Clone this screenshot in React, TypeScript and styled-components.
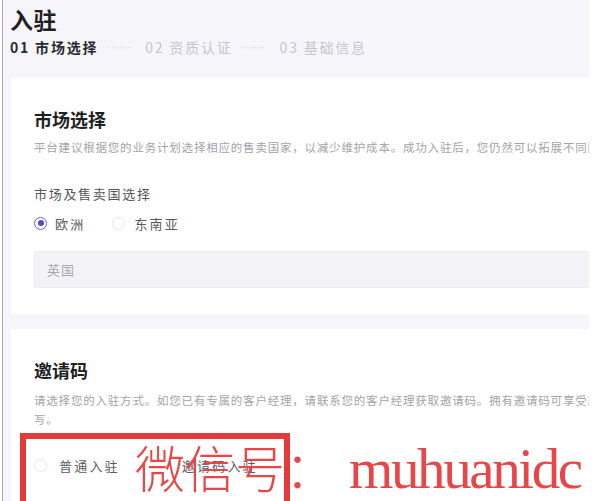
import React from "react";
import styled, { createGlobalStyle } from "styled-components";

const GlobalStyle = createGlobalStyle`
  html, body {
    margin: 0;
    padding: 0;
    background: #ffffff;
  }
  body {
    font-family: "Noto Sans CJK SC", "Noto Sans", sans-serif;
  }
`;

const Screen = styled.div`
  position: relative;
  display: flex;
  width: 605px;
  height: 501px;
  overflow: hidden;
  background: #ffffff;
`;

const Edge = styled.div`
  width: 3px;
  flex: none;
  border-right: 1.5px solid #a9a9ad;
  box-sizing: border-box;
`;

const Main = styled.main`
  width: 586px;
  flex: none;
  overflow: hidden;
  background: #f6f6fa;
  padding: 4px 0 0 7px;
  box-sizing: border-box;
`;

const Title = styled.h1`
  margin: 0;
  font-size: 23px;
  line-height: 30px;
  font-weight: 700;
  letter-spacing: 0.5px;
  color: #1f1f24;
`;

const Steps = styled.div`
  display: flex;
  align-items: center;
  gap: 9px;
  margin-top: 3px;
  height: 20px;
`;

const Step = styled.span<{ active?: boolean }>`
  font-size: 14px;
  letter-spacing: 1.8px;
  font-weight: ${({ active }) => (active ? 700 : 400)};
  color: ${({ active }) => (active ? "#2a2a30" : "#c6c6ce")};
`;

const Dots = styled.span`
  font-family: "Liberation Sans", sans-serif;
  font-size: 12px;
  letter-spacing: 0;
  color: #d6d6dc;
  margin-right: 5px;
`;

const Card = styled.section<{ gap?: number }>`
  width: 640px;
  margin-left: 1px;
  background: #ffffff;
  margin-top: ${({ gap }) => gap ?? 0}px;
  padding: 28px 23px 26px;
  box-sizing: border-box;
`;

const CardTitle = styled.h2`
  margin: 0;
  font-size: 18px;
  line-height: 26px;
  font-weight: 700;
  color: #1f1f24;
`;

const Desc = styled.p<{ nowrap?: boolean; top: number }>`
  margin: ${({ top }) => top}px 0 0;
  font-size: 11.5px;
  line-height: 19px;
  letter-spacing: 0.8px;
  color: #a3a3aa;
  white-space: ${({ nowrap }) => (nowrap ? "nowrap" : "normal")};
`;

const Label = styled.div`
  margin-top: 27px;
  font-size: 13px;
  line-height: 20px;
  letter-spacing: 1.7px;
  color: #55555c;
`;

const RadioRow = styled.div<{ top: number; spread: number }>`
  display: flex;
  align-items: center;
  gap: ${({ spread }) => spread}px;
  margin-top: ${({ top }) => top}px;
  height: 20px;
`;

const Option = styled.label<{ space: number }>`
  display: flex;
  align-items: center;
  gap: ${({ space }) => space}px;
  font-size: 13px;
  letter-spacing: 2.2px;
  color: #5a5a62;
`;

const Radio = styled.span<{ checked?: boolean }>`
  position: relative;
  width: 13px;
  height: 13px;
  border-radius: 50%;
  box-sizing: border-box;
  border: 1.5px solid ${({ checked }) => (checked ? "#6a5fd8" : "#e6e6ea")};
  &::after {
    content: "";
    display: ${({ checked }) => (checked ? "block" : "none")};
    position: absolute;
    inset: 2.5px;
    border-radius: 50%;
    background: #5549cf;
  }
`;

const Field = styled.div`
  margin-top: 18px;
  height: 37px;
  display: flex;
  align-items: center;
  padding-left: 12px;
  background: #f3f3f7;
  border: 1px solid #ececf1;
  border-radius: 2px;
  font-size: 13px;
  letter-spacing: 1px;
  color: #a8a8b0;
  box-sizing: border-box;
`;

const Highlight = styled.div`
  position: absolute;
  left: 20px;
  top: 433px;
  width: 270px;
  height: 90px;
  border: 6px solid #e43a3c;
  box-sizing: border-box;
`;

const Watermark = styled.div`
  position: absolute;
  left: 135px;
  top: 434px;
  display: flex;
  align-items: baseline;
  line-height: 64px;
  color: #e8474a;
  white-space: nowrap;
`;

const MarkCjk = styled.span`
  font-family: "Noto Sans CJK SC", sans-serif;
  font-size: 50px;
  font-weight: 300;
`;

const MarkLatin = styled.span`
  font-family: "Liberation Serif", serif;
  font-size: 57px;
  letter-spacing: -2.4px;
  margin-left: 14px;
`;

export default function App() {
  return (
    <>
      <GlobalStyle />
      <Screen>
        <Edge />
        <Main>
          <Title>入驻</Title>
          <Steps>
            <Step active>01 市场选择</Step>
            <Dots>······</Dots>
            <Step>02 资质认证</Step>
            <Dots>······</Dots>
            <Step>03 基础信息</Step>
          </Steps>

          <Card gap={21}>
            <CardTitle>市场选择</CardTitle>
            <Desc nowrap top={6}>
              平台建议根据您的业务计划选择相应的售卖国家，以减少维护成本。成功入驻后，您仍然可以拓展不同国家的市场。
            </Desc>
            <Label>市场及售卖国选择</Label>
            <RadioRow top={9} spread={27}>
              <Option space={8}>
                <Radio checked />
                欧洲
              </Option>
              <Option space={9}>
                <Radio />
                东南亚
              </Option>
            </RadioRow>
            <Field>英国</Field>
          </Card>

          <Card gap={15}>
            <CardTitle>邀请码</CardTitle>
            <Desc top={8}>
              请选择您的入驻方式。如您已有专属的客户经理，请联系您的客户经理获取邀请码。拥有邀请码可享受简化填写。
            </Desc>
            <RadioRow top={26} spread={62}>
              <Option space={12}>
                <Radio />
                普通入驻
              </Option>
              <Option space={0}>邀请码入驻</Option>
            </RadioRow>
          </Card>
        </Main>
        <Highlight />
        <Watermark>
          <MarkCjk>微信号：</MarkCjk>
          <MarkLatin>muhuanidc</MarkLatin>
        </Watermark>
      </Screen>
    </>
  );
}
